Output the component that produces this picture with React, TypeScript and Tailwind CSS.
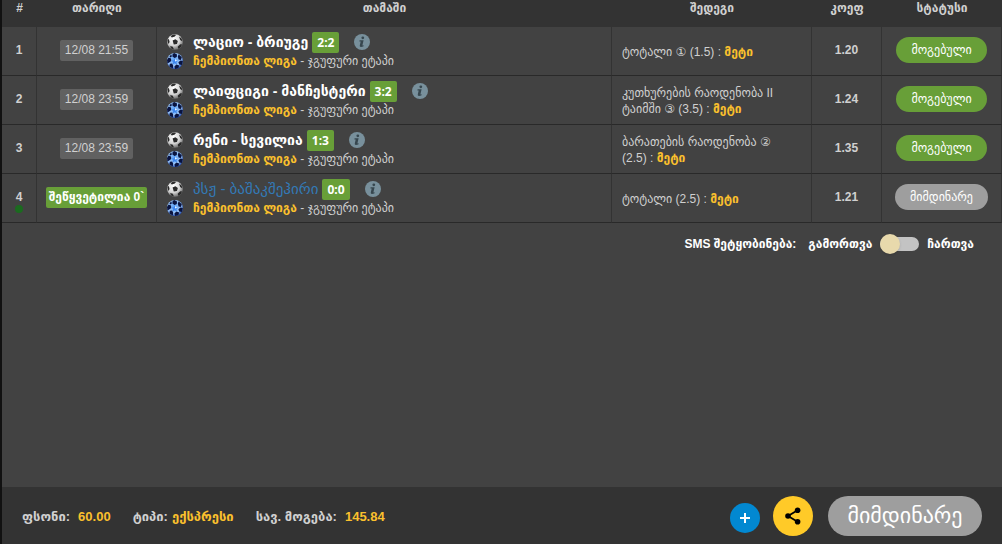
import { useState } from "react";

type Bet = {
  id: number;
  date: string;
  live?: boolean;
  teams: string;
  score: string;
  market: string;
  won: boolean;
  coef: string;
};

const bets: Bet[] = [
  {
    id: 1,
    date: "12/08 21:55",
    teams: "ლაციო - ბრიუგე",
    score: "2:2",
    market: "ტოტალი ① (1.5)\u00a0:",
    won: true,
    coef: "1.20",
  },
  {
    id: 2,
    date: "12/08 23:59",
    teams: "ლაიფციგი - მანჩესტერი",
    score: "3:2",
    market: "კუთხურების რაოდენობა II ტაიმში ③ (3.5)\u00a0:",
    won: true,
    coef: "1.24",
  },
  {
    id: 3,
    date: "12/08 23:59",
    teams: "რენი - სევილია",
    score: "1:3",
    market: "ბარათების რაოდენობა ② (2.5)\u00a0:",
    won: true,
    coef: "1.35",
  },
  {
    id: 4,
    date: "შეწყვეტილია 0`",
    live: true,
    teams: "პსჟ - ბაშაკშეჰირი",
    score: "0:0",
    market: "ტოტალი (2.5)\u00a0:",
    won: false,
    coef: "1.21",
  },
];

function SoccerBall() {
  return (
    <svg viewBox="0 0 16 16" className="size-4 shrink-0" aria-hidden="true">
      <defs>
        <radialGradient id="leather" cx="0.4" cy="0.3" r="0.7">
          <stop offset="0" stopColor="#fff" />
          <stop offset="0.6" stopColor="#d6d6d6" />
          <stop offset="1" stopColor="#707070" />
        </radialGradient>
        <clipPath id="ball">
          <circle cx="8" cy="8" r="7.8" />
        </clipPath>
      </defs>
      <circle cx="8" cy="8" r="7.8" fill="url(#leather)" />
      <g clipPath="url(#ball)" fill="#2a2a2a">
        <path d="M5.6 6.6 8.4 5.2l2.4 1.8-.8 3-3.2.4z" />
        <path d="M3.6 2 6.8.2l2.4.6L7.8 2.4l-3 1z" />
        <path d="m12 2.6 2.6 1.8.8 3-2.2-1.4z" />
        <path d="M.2 6 1.800 5l.8 3L1.200 10z" />
        <path d="m3.2 12 2.6.8L7 15.600l-3-1z" />
        <path d="m10.8 12.4 2.6-2.2 1.8.2-1.8 3.4-2.400 1z" />
      </g>
    </svg>
  );
}

function StarBall() {
  return (
    <svg viewBox="0 0 16 16" className="size-4 shrink-0" aria-hidden="true">
      <defs>
        <radialGradient id="night" cx="0.45" cy="0.4" r="0.6">
          <stop offset="0" stopColor="#5ea2f5" />
          <stop offset="0.7" stopColor="#9cc6f8" />
          <stop offset="1" stopColor="#2450b4" />
        </radialGradient>
      </defs>
      <circle cx="8" cy="8" r="8" fill="url(#night)" />
      <g fill="#0a1440">
        <path d="M7.4 0 10 1.400 9.800 4 7.600 5 5.400 3.600 5.600 1z" />
        <path d="m11.6 1.2 3.2 3-1 2.8-2.2-.6-.8-2.6z" />
        <path d="m15.9 8-1 4-2.7-.4-.8-2.4 2-1.6z" />
        <path d="m12.2 12.6-.8 2.4-3.2 1-.8-2.4 2-2z" />
        <path d="m6.2 12.8-.4 2.6L2.4 13.400l.4-2.600 2.400-.2z" />
        <path d="M2.2 9.600.4 10.600 0 7l1.600-2.600L4 5.600l.2 2.400z" />
        <path d="M2.4 3.200 4.400 1.400l.4 2.200-1.400 1z" />
      </g>
      <path
        d="m7.8 5.2 1 2 2.400.2-1.800 1.600.6 2.400-2.200-1.200-2.200 1.200.6-2.400-1.800-1.600 2.400-.2z"
        fill="#3d86ee"
      />
      <path d="m8 5.400 1 1.900 2.200.2-3.200 1z" fill="#e8f3ff" />
    </svg>
  );
}

function InfoIcon() {
  return (
    <svg viewBox="0 0 16 16" className="size-4" aria-hidden="true">
      <circle cx="8" cy="8" r="8" fill="#78909c" />
      <circle cx="8.8" cy="3.8" r="1.4" fill="#37474f" />
      <path
        d="M5.6 6.200h4L8.500 11q-.1.800.9.400l.4-.2-.2 1.100q-1.200.8-2.700.8-1.500-.1-1.100-1.800l.9-3.800H5.400z"
        fill="#37474f"
      />
    </svg>
  );
}

function BetRow({ bet }: { bet: Bet }) {
  return (
    <tr className="h-[49px] *:border-r *:border-b *:border-r-[#333] *:border-b-[#292929]">
      <td className="pb-0.5 text-center text-xs font-bold">
        {bet.live ? (
          <span className="flex flex-col items-center pt-2">
            <span className="leading-4">{bet.id}</span>
            <span className="size-2 rounded-full bg-[#1b6b1f]" />
          </span>
        ) : (
          bet.id
        )}
      </td>
      <td className="pb-0.5">
        <div className="flex justify-center">
          {bet.live ? (
            <span className="rounded-xs bg-[#689f38] px-[3px] text-xs leading-[21px] font-bold whitespace-nowrap text-white">
              {bet.date}
            </span>
          ) : (
            <span className="rounded-xs bg-[#616161] px-[5px] text-xs leading-[21px] whitespace-nowrap">
              {bet.date}
            </span>
          )}
        </div>
      </td>
      <td className="pb-0.5 pl-[10px]">
        <div className="flex h-[21px] items-center">
          <SoccerBall />
          <a
            href="#match"
            className={
              bet.live
                ? "ml-[10px] text-[15px] leading-5 whitespace-nowrap text-[#337ab7]"
                : "ml-[10px] text-sm leading-5 font-bold whitespace-nowrap text-white"
            }
          >
            {bet.teams}
          </a>
          <span className="ml-1 rounded-xs bg-[#689f38] px-[5px] font-['Open_Sans'] text-xs leading-[21px] font-bold text-white">
            {bet.score}
          </span>
          <button type="button" aria-label="ინფო" className="ml-[15px]">
            <InfoIcon />
          </button>
        </div>
        <div className="flex h-4 items-center">
          <StarBall />
          <span className="ml-[10px] text-xs whitespace-nowrap">
            <b className="text-[#fbc02d]">ჩემპიონთა ლიგა</b> - ჯგუფური ეტაპი
          </span>
        </div>
      </td>
      <td className="px-[10px] pt-px text-xs leading-4">
        {bet.market} <b className="text-[#fbc02d]">მეტი</b>
      </td>
      <td className="pb-0.5 text-center text-xs font-bold">{bet.coef}</td>
      <td className="pb-0.5">
        <div className="flex justify-center">
          <span
            className={
              bet.won
                ? "rounded-full bg-[#689f38] px-[15px] text-xs leading-[26px] text-white"
                : "rounded-full bg-[#9e9e9e] px-[15px] text-xs leading-[26px] text-white"
            }
          >
            {bet.won ? "მოგებული" : "მიმდინარე"}
          </span>
        </div>
      </td>
    </tr>
  );
}

export default function App() {
  const [sms, setSms] = useState(false);

  return (
    <div className="flex min-h-screen flex-col border-l-2 border-[#111] bg-[#424242] font-['Liberation_Sans','DejaVu_Sans',sans-serif] text-[#d0d0d0]">
      <table className="w-full table-fixed border-separate border-spacing-0">
        <colgroup>
          <col className="w-[35px]" />
          <col className="w-[120px]" />
          <col />
          <col className="w-[200px]" />
          <col className="w-[70px]" />
          <col className="w-[120px]" />
        </colgroup>
        <thead>
          <tr className="h-[27px] bg-[#333] align-top text-xs leading-4 font-bold">
            <th>#</th>
            <th>თარიღი</th>
            <th>თამაში</th>
            <th>შედეგი</th>
            <th>კოეფ</th>
            <th>სტატუსი</th>
          </tr>
        </thead>
        <tbody>
          {bets.map((bet) => (
            <BetRow key={bet.id} bet={bet} />
          ))}
        </tbody>
      </table>

      <div className="flex items-center justify-end px-7 pt-[11px] text-xs leading-5 font-bold text-white">
        <span className="mr-3">SMS შეტყობინება:</span>
        <label htmlFor="sms" className="flex items-center gap-2">
          გამორთვა
          <span className="relative flex h-5 w-[39px] items-center">
            <input
              id="sms"
              type="checkbox"
              role="switch"
              checked={sms}
              onChange={(event) => setSms(event.target.checked)}
              className="peer h-[14px] w-full appearance-none rounded-full bg-[#c3c3c3]"
            />
            <span className="pointer-events-none absolute left-0 size-5 rounded-full bg-[#e8d9ac] shadow-sm peer-checked:right-0 peer-checked:left-auto" />
          </span>
          ჩართვა
        </label>
      </div>

      <footer className="mt-auto flex h-[57px] items-center justify-between bg-[#333] px-5 text-[13px] font-bold">
        <dl className="flex gap-[22px] pt-0.5 whitespace-nowrap">
          <div className="flex items-center gap-2">
            <dt>ფსონი:</dt>
            <dd className="text-[#fbc02d]">60.00</dd>
          </div>
          <div className="flex items-center gap-1">
            <dt>ტიპი:</dt>
            <dd className="text-[#fbc02d]">ექსპრესი</dd>
          </div>
          <div className="flex items-center gap-2">
            <dt>სავ. მოგება:</dt>
            <dd className="text-[#fbc02d]">145.84</dd>
          </div>
        </dl>
        <div className="flex items-center">
          <button
            type="button"
            aria-label="დამატება"
            className="mt-1 flex size-[30px] items-center justify-center rounded-full bg-[#0288d1]"
          >
            <svg viewBox="0 0 10 10" className="size-[10px]">
              <path d="M5 0v10M0 5h10" stroke="#fff" strokeWidth="2" />
            </svg>
          </button>
          <button
            type="button"
            aria-label="გაზიარება"
            className="ml-[13px] flex size-10 items-center justify-center rounded-full bg-[#ffca28]"
          >
            <svg viewBox="0 0 16 18" className="h-[18px] w-4">
              <path
                d="M12.6 3.2 3 9l9.6 5.8"
                fill="none"
                stroke="#000"
                strokeWidth="1.8"
              />
              <circle cx="12.6" cy="3.2" r="2.8" />
              <circle cx="3" cy="9" r="2.8" />
              <circle cx="12.6" cy="14.8" r="2.8" />
            </svg>
          </button>
          <button
            type="button"
            className="ml-[15px] h-10 w-[154px] rounded-full bg-[#9e9e9e] text-[22px] font-normal text-white"
          >
            მიმდინარე
          </button>
        </div>
      </footer>
    </div>
  );
}
